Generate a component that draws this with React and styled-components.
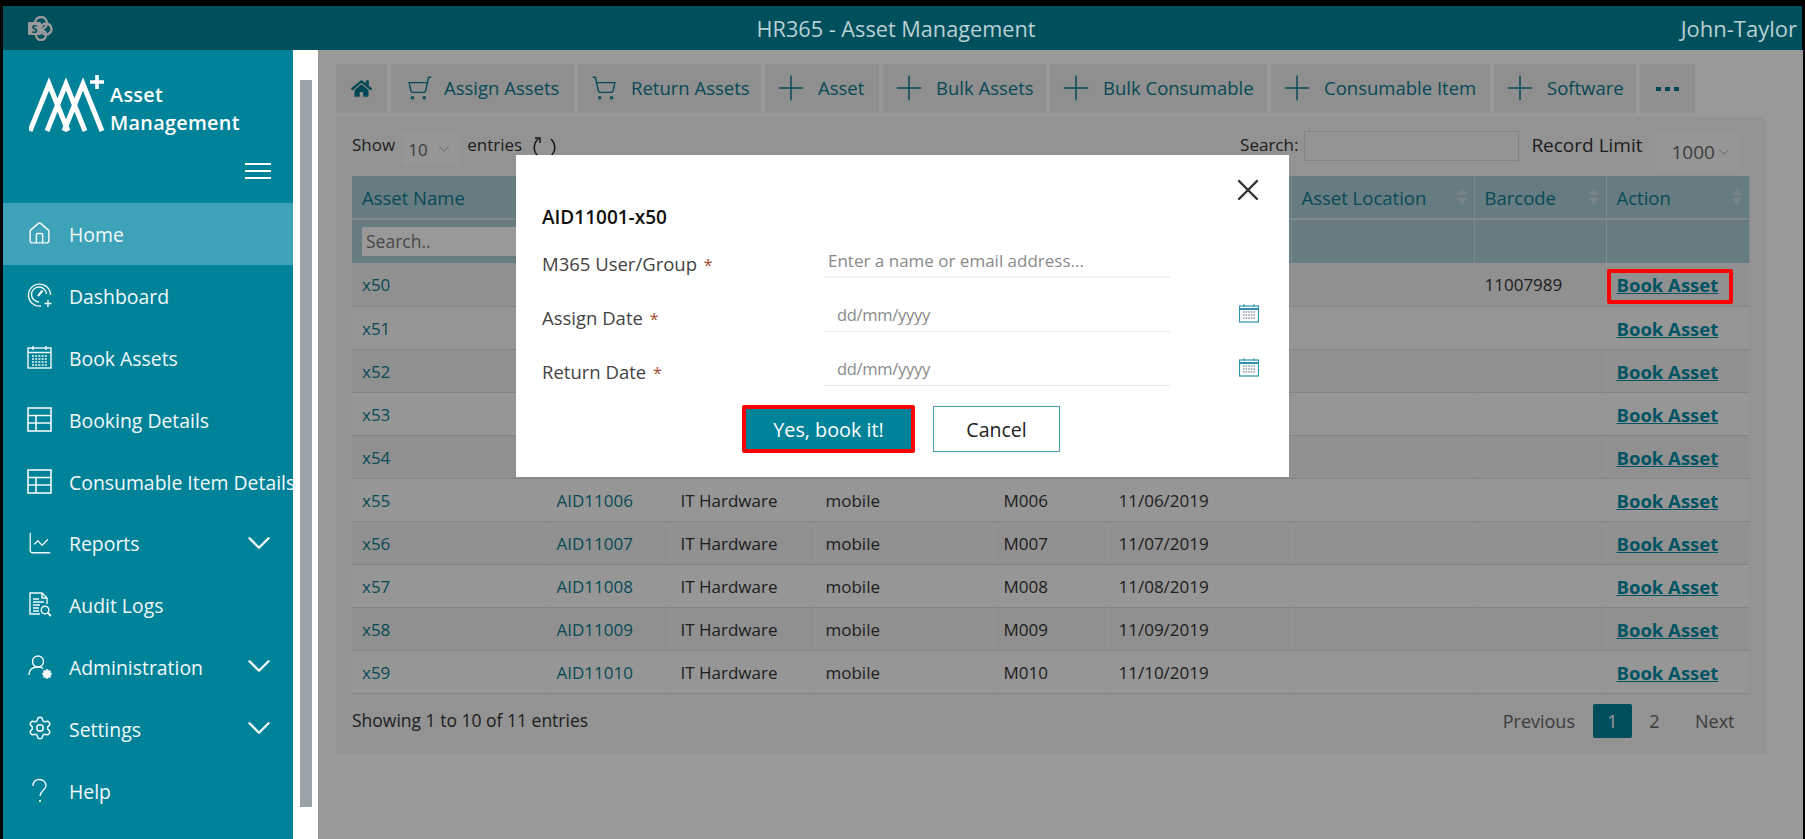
import React from 'react'
import styled, { createGlobalStyle } from 'styled-components'
import { House, Settings, ChevronDown, ShoppingCart, X, Plus, ChartLine } from 'lucide-react'
import { FaHome } from 'react-icons/fa'

const FONT = '"Open Sans", "Noto Sans", sans-serif'

const NAV_ITEMS = [
  { label: 'Home', icon: 'home', active: true },
  { label: 'Dashboard', icon: 'dashboard' },
  { label: 'Book Assets', icon: 'calendar' },
  { label: 'Booking Details', icon: 'table' },
  { label: 'Consumable Item Details', icon: 'table' },
  { label: 'Reports', icon: 'chart', expandable: true },
  { label: 'Audit Logs', icon: 'audit' },
  { label: 'Administration', icon: 'admin', expandable: true },
  { label: 'Settings', icon: 'settings', expandable: true },
  { label: 'Help', icon: 'help' }
]

const TOOLBAR_ITEMS = [
  { label: 'Assign Assets', icon: 'assign', width: 183, pad: 16, gap: 11 },
  { label: 'Return Assets', icon: 'cart', width: 183, pad: 13, gap: 14 },
  { label: 'Asset', icon: 'plus', width: 114, pad: 6, gap: 7 },
  { label: 'Bulk Assets', icon: 'plus', width: 163, pad: 6, gap: 7 },
  { label: 'Bulk Consumable', icon: 'plus', width: 217, pad: 6, gap: 7 },
  { label: 'Consumable Item', icon: 'plus', width: 219, pad: 6, gap: 7 },
  { label: 'Software', icon: 'plus', width: 142, pad: 6, gap: 7 }
]

// columns without a label sit behind the dialog in this view
const COLUMNS = [
  { key: 'name', label: 'Asset Name', width: 194, filter: true },
  { key: 'id', label: '', width: 124 },
  { key: 'category', label: '', width: 145 },
  { key: 'type', label: '', width: 178 },
  { key: 'model', label: '', width: 115 },
  { key: 'date', label: '', width: 183 },
  { key: 'location', label: 'Asset Location', width: 183 },
  { key: 'barcode', label: 'Barcode', width: 132 },
  { key: 'action', label: 'Action', width: 143 }
]

const ROWS = Array.from(new Array(10)).map((_, index) => {
  const number = String(index + 1).padStart(2, '0')
  const covered = index < 5
  return {
    name: `x${50 + index}`,
    id: covered ? '' : `AID110${number}`,
    category: covered ? '' : 'IT Hardware',
    type: covered ? '' : 'mobile',
    model: covered ? '' : `M0${number}`,
    date: covered ? '' : `11/${number}/2019`,
    barcode: index === 0 ? '11007989' : ''
  }
})

const GlobalStyle = createGlobalStyle`
  html, body {
    margin: 0;
    height: 100%;
    overflow: hidden;
    background: #000;
  }

  * {
    box-sizing: border-box;
  }

  body {
    font-family: ${FONT};
  }
`

const Page = styled.div`
  display: flex;
  flex-direction: column;
  height: 839px;
  padding: 6px 3px 0;
  background: #000;
`

const TopBar = styled.header`
  display: grid;
  grid-template-columns: 1fr auto 1fr;
  align-items: center;
  flex: 0 0 44px;
  padding: 0 5px 0 24px;
  background: #004f5c;
  color: #b9d0d4;
`

const TopTitle = styled.div`
  transform: translateX(-16px);
  font-size: 21.7px;
`

const UserName = styled.div`
  justify-self: end;
  font-size: 22px;
`

const Body = styled.div`
  display: flex;
  flex: 1;
  min-height: 0;
`

const Sidebar = styled.aside`
  flex: 0 0 290px;
  overflow: hidden;
  background: #008299;
  color: #fff;
`

const Brand = styled.div`
  display: flex;
  flex-direction: column;
  height: 153px;
  padding: 25px 24px 0 26px;
`

const BrandRow = styled.div`
  display: flex;
  align-items: flex-start;
`

const BrandText = styled.div`
  margin: 6px 0 0 -1px;
  font-size: 19.8px;
  font-weight: 600;
  line-height: 28px;
  letter-spacing: 0.3px;
`

const Hamburger = styled.div`
  display: flex;
  flex-direction: column;
  gap: 5px;
  align-self: flex-end;
  width: 26px;
  margin-top: 26px;
  margin-right: -2px;

  & > span {
    height: 2px;
    background: #fff;
  }
`

const NavRow = styled.div`
  display: flex;
  align-items: center;
  height: 61.8px;
  padding: 0 15px 0 24px;
  background: ${({ $active }) => ($active ? '#3ea3b8' : 'transparent')};
  white-space: nowrap;
  font-size: 19.4px;
  color: #f2f9fa;
`

const NavIcon = styled.span`
  display: flex;
  flex: 0 0 42px;
  align-items: center;
`

const NavLabel = styled.span`
  flex: 1;
  padding-top: 2px;
`

const ScrollTrack = styled.div`
  flex: 0 0 25px;
  padding: 30px 6px 32px 7px;
  background: #fff;
`

const ScrollThumb = styled.div`
  height: 100%;
  background: #9aa3aa;
`

const Main = styled.main`
  position: relative;
  flex: 1;
  padding: 14px 37px 0 18px;
  background: #fff;
  color: #333;
  font-size: 17px;
`

const Toolbar = styled.div`
  display: flex;
  gap: 4px;
  height: 49px;
`

const ToolButton = styled.div`
  display: flex;
  align-items: center;
  gap: ${({ $gap }) => $gap}px;
  width: ${({ $width }) => $width}px;
  padding: 0 0 2px ${({ $pad }) => $pad}px;
  background: #eeeeee;
  color: #0a7c92;
  font-size: 18.5px;
  white-space: nowrap;
`

const HomeButton = styled(ToolButton)`
  justify-content: center;
  width: 51px;
  padding: 0;
  color: #00788e;
`

const MoreButton = styled(ToolButton)`
  justify-content: center;
  gap: 4px;
  width: 55px;
  padding: 0;

  & > span {
    width: 5px;
    height: 4px;
    background: #007a90;
  }
`

const Panel = styled.section`
  height: 637px;
  margin-top: 4px;
  padding: 0 16px;
  background: #f5f5f5;
`

const Controls = styled.div`
  display: flex;
  justify-content: space-between;
  height: 59px;
`

const ControlGroup = styled.div`
  display: flex;
  align-items: flex-start;
  padding-top: 15px;
  font-size: 17px;
  line-height: 25px;
`

const LimitLabel = styled.span`
  font-size: 19px;
  line-height: 27px;
`

const SelectBox = styled.div`
  display: flex;
  align-items: center;
  justify-content: space-between;
  width: ${({ $width }) => $width}px;
  height: ${({ $height }) => $height}px;
  margin: ${({ $margin }) => $margin};
  padding: 0 6px 0 ${({ $left }) => $left}px;
  background: #fbfbfb;
  color: #666;
  font-size: ${({ $size }) => $size}px;
  flex-shrink: 0;
`

const RefreshIcon = styled.svg`
  margin: 4px 0 0 10px;
`

const SearchInput = styled.div`
  width: 215px;
  height: 30px;
  margin: -1px 12px 0 6px;
  border: 1px solid #dadada;
  background: #f5f5f5;
`

const Table = styled.table`
  width: 1397px;
  border-collapse: collapse;
  table-layout: fixed;
  font-size: 17px;
`

const HeadCell = styled.th`
  position: relative;
  height: 43px;
  padding: 0 10px;
  border-right: 1px solid #d5e6e9;
  border-bottom: 2px solid #d5e6e9;
  background: #accfd5;
  color: #0a7c92;
  font-size: 18.5px;
  font-weight: 400;
  text-align: left;
  white-space: nowrap;
`

const SortArrows = styled.span`
  position: absolute;
  top: 12px;
  right: 7px;
  display: flex;
  flex-direction: column;
  gap: 3px;

  &::before,
  &::after {
    content: '';
    border-right: 5px solid transparent;
    border-left: 5px solid transparent;
  }

  &::before {
    border-bottom: 7px solid #c8dde1;
  }

  &::after {
    border-top: 7px solid #c8dde1;
  }
`

const FilterCell = styled.td`
  height: 44px;
  padding: 0 10px;
  border-right: 1px solid #d5e6e9;
  background: #accfd5;
`

const FilterInput = styled.div`
  height: 29px;
  padding-left: 4px;
  background: #fff;
  color: #777;
  font-size: 17.5px;
  line-height: 28px;
`

const Row = styled.tr`
  background: ${({ $striped }) => ($striped ? '#f0f0f0' : '#fbfbfb')};
`

const Cell = styled.td`
  position: relative;
  height: 43px;
  padding: 1px 10px 0;
  border-right: 1px solid ${({ $striped }) => ($striped ? '#f8f8f8' : 'transparent')};
  border-bottom: 1px solid #dddddd;
  color: ${({ $link }) => ($link ? '#0a7c92' : '#333')};
  white-space: nowrap;
`

const BookLink = styled.a`
  color: #008ca5;
  font-size: 18.5px;
  font-weight: 700;
  text-decoration: underline;
`

const Highlight = styled.div`
  position: absolute;
  z-index: 20;
  top: 6px;
  left: 0;
  width: 126px;
  height: 35px;
  border: 4px solid #f00;
  border-radius: 2px;
`

const PanelFooter = styled.div`
  display: flex;
  align-items: flex-start;
  justify-content: space-between;
  padding: 14px 15px 0 0;
  font-size: 17.5px;
`

const Pager = styled.div`
  display: flex;
  align-items: center;
  margin-top: -4px;
  color: #666;
  font-size: 18px;
`

const PageNumber = styled.div`
  display: flex;
  align-items: center;
  justify-content: center;
  width: 39px;
  height: 34px;
  margin: ${({ $margin }) => $margin || '0'};
  border-radius: 2px;
  background: ${({ $current }) => ($current ? '#008299' : 'transparent')};
  color: ${({ $current }) => ($current ? '#fff' : '#666')};
`

const Overlay = styled.div`
  position: absolute;
  z-index: 10;
  inset: 0;
  padding: 105px 0 0 198px;
  background: rgba(0, 0, 0, 0.4);
`

const Modal = styled.div`
  position: relative;
  width: 773px;
  height: 322px;
  padding: 50px 26px 0;
  background: #fff;
  color: #444;
`

const CloseButton = styled.div`
  position: absolute;
  top: 17px;
  right: 23px;
  color: #333;
  line-height: 0;
`

const ModalTitle = styled.div`
  color: #111;
  font-size: 19px;
  font-weight: 600;
  line-height: 24px;
`

const FormRow = styled.div`
  display: grid;
  grid-template-columns: 281px 347px 1fr;
  height: 54px;
  margin-top: ${({ $first }) => ($first ? '-5px' : '0')};
`

const FormLabel = styled.div`
  align-self: end;
  font-size: 18.5px;
  line-height: 26px;
`

const Required = styled.span`
  margin-left: 2px;
  color: #a5482f;
  font-size: 16px;
`

const FormInput = styled.div`
  align-self: end;
  height: 37px;
  padding: 7px 0 0 ${({ $left }) => $left}px;
  border-bottom: ${({ $thick }) => ($thick ? '2px solid #f2f2f2' : '1px solid #e6e6e6')};
  color: #8a8a8a;
  font-size: ${({ $thick }) => ($thick ? '17px' : '16.5px')};
  letter-spacing: ${({ $thick }) => ($thick ? '0' : '-0.3px')};
  line-height: 26px;
`

const DateIcon = styled.div`
  align-self: end;
  justify-self: end;
  height: 19px;
  margin: 0 4px 9px 0;
`

const ModalActions = styled.div`
  display: flex;
  align-items: center;
  gap: 18px;
  margin: 19px 0 0 200px;
`

const ConfirmButton = styled.div`
  display: flex;
  align-items: center;
  justify-content: center;
  width: 173px;
  height: 48px;
  border: 4px solid #f00;
  border-radius: 2px;
  background: #008299;
  color: #fff;
  font-size: 19.8px;
`

const CancelButton = styled.div`
  display: flex;
  align-items: center;
  justify-content: center;
  width: 127px;
  height: 46px;
  border: 1px solid #4c9fb0;
  color: #222;
  font-size: 19.5px;
`

const SharePointIcon = () => (
  <svg width="26" height="25" viewBox="0 0 26 25">
    <circle cx="14" cy="7" r="6" fill="none" stroke="#9b9b9b" strokeWidth="2.4" />
    <circle cx="19" cy="13" r="5.5" fill="none" stroke="#9b9b9b" strokeWidth="2.4" />
    <circle cx="14" cy="19" r="5" fill="none" stroke="#9b9b9b" strokeWidth="2.4" />
    <rect x="1" y="6" width="13" height="13" rx="1" fill="#9b9b9b" />
    <text x="7.5" y="16.5" textAnchor="middle" fontSize="11" fontWeight="700" fontFamily="Open Sans" fill="#004f5c">S</text>
  </svg>
)

const Logo = () => (
  <svg width="82" height="58" viewBox="0 0 82 58" fill="none" stroke="#fff">
    <path d="M1 56 L20 9 L39 56 M18 56 L37 9 L56 56 M35 56 L54 9 L73 56" strokeWidth="5" />
    <path d="M68 0 V14 M61 7 H75" strokeWidth="3.6" />
  </svg>
)

const CustomIcon = ({ name, size = 25, color = 'currentColor' }) => {
  const common = {
    width: size,
    height: size,
    viewBox: '0 0 25 25',
    fill: 'none',
    stroke: color,
    strokeWidth: 1.4
  }
  if (name === 'dashboard') {
    return (
      <svg {...common}>
        <path d="M14 23 A11 11 0 1 1 23.5 12" />
        <path d="M12 19 A7.5 7.5 0 1 1 19.5 11" />
        <path d="M11 13 L15.5 7.5" strokeWidth="2" />
        <path d="M21 17 V24 M17.5 20.5 H24.5" />
      </svg>
    )
  }
  if (name === 'calendar') {
    return (
      <svg {...common}>
        <rect x="1" y="3" width="23" height="20" />
        <path d="M1 7.5 H24 M6 1 V5 M19 1 V5" />
        <path d="M5 11 H20 M5 14 H20 M5 17 H20 M5 20 H20" strokeWidth="1.7" strokeDasharray="2 1.2" />
      </svg>
    )
  }
  if (name === 'table') {
    return (
      <svg {...common}>
        <rect x="1" y="1" width="23" height="23" strokeWidth="1.6" />
        <path d="M1 8.5 H24 M1 16 H24 M9 8.5 V24" strokeWidth="1.6" />
      </svg>
    )
  }
  if (name === 'audit') {
    return (
      <svg {...common}>
        <path d="M13 22 H3 V1 H15 L20 6 V12" />
        <path d="M15 1 V6 H20 M6 7 H12 M6 10 H17 M6 13 H13 M6 16 H12 M6 19 H12" />
        <circle cx="18" cy="18" r="3.8" />
        <path d="M21 21 L24 24" strokeWidth="1.8" />
      </svg>
    )
  }
  if (name === 'admin') {
    return (
      <svg {...common}>
        <circle cx="11" cy="7.5" r="5.5" />
        <path d="M2 21 C2 15 6 13 11 13 C13 13 15 13.4 16 14.5" />
        <circle cx="20" cy="20" r="2.8" strokeWidth="2.4" />
        <path d="M20 15 V25 M15 20 H25 M16.5 16.5 L23.5 23.5 M23.5 16.5 L16.5 23.5" strokeWidth="1.5" />
      </svg>
    )
  }
  if (name === 'help') {
    return (
      <svg {...common}>
        <path d="M6 8 C6 3 9 1.5 12.5 1.5 C16 1.5 19 4 19 7.5 C19 12 13 12.5 13 18" />
        <path d="M13 22 V24" strokeWidth="1.8" />
      </svg>
    )
  }
  return null
}

const navIconFor = (name) => {
  if (name === 'home') return <House size={25} strokeWidth={1.4} />
  if (name === 'settings') return <Settings size={26} strokeWidth={1.4} />
  if (name === 'chart') return <ChartLine size={26} strokeWidth={1.2} />
  return <CustomIcon name={name} />
}

const toolIconFor = (name) => {
  if (name === 'assign') {
    return <ShoppingCart size={26} strokeWidth={1.3} style={{ transform: 'scaleX(-1)' }} />
  }
  if (name === 'cart') return <ShoppingCart size={26} strokeWidth={1.3} />
  return <Plus size={40} strokeWidth={0.9} />
}

const CalendarSmall = () => (
  <svg width="20" height="19" viewBox="0 0 20 19" fill="none" stroke="#2e93a8">
    <rect x="0.5" y="2" width="19" height="16" strokeWidth="1.2" />
    <path d="M0.5 5 H19.5" strokeWidth="2" />
    <path d="M5 0 V3 M15 0 V3" />
    <path d="M4 8 H16 M4 11 H16 M4 14 H16" stroke="#8a9ca3" strokeWidth="1.6" strokeDasharray="1.6 1" />
  </svg>
)

const renderField = (label, input, dateIcon, first) => (
  <FormRow $first={first} key={label}>
    <FormLabel>
      {label} <Required>*</Required>
    </FormLabel>
    {input}
    {dateIcon ? (
      <DateIcon>
        <CalendarSmall />
      </DateIcon>
    ) : null}
  </FormRow>
)

export default function App() {
  return (
    <Page>
      <GlobalStyle />
      <TopBar>
        <SharePointIcon />
        <TopTitle>HR365 - Asset Management</TopTitle>
        <UserName>John-Taylor</UserName>
      </TopBar>
      <Body>
        <Sidebar>
          <Brand>
            <BrandRow>
              <Logo />
              <BrandText>
                Asset
                <br />
                Management
              </BrandText>
            </BrandRow>
            <Hamburger>
              <span />
              <span />
              <span />
            </Hamburger>
          </Brand>
          {NAV_ITEMS.map((item) => (
            <NavRow $active={item.active} key={item.label}>
              <NavIcon>{navIconFor(item.icon)}</NavIcon>
              <NavLabel>{item.label}</NavLabel>
              {item.expandable ? <ChevronDown size={38} strokeWidth={1.5} /> : null}
            </NavRow>
          ))}
        </Sidebar>
        <ScrollTrack>
          <ScrollThumb />
        </ScrollTrack>
        <Main>
          <Toolbar>
            <HomeButton>
              <FaHome size={21} />
            </HomeButton>
            {TOOLBAR_ITEMS.map((item) => (
              <ToolButton $width={item.width} $pad={item.pad} $gap={item.gap} key={item.label}>
                {toolIconFor(item.icon)}
                {item.label}
              </ToolButton>
            ))}
            <MoreButton>
              <span />
              <span />
              <span />
            </MoreButton>
          </Toolbar>
          <Panel>
            <Controls>
              <ControlGroup>
                Show
                <SelectBox $width={56} $height={32} $margin="1px 8px 0 8px" $left={5} $size={17}>
                  10
                  <ChevronDown size={18} strokeWidth={1.3} color="#aaa" />
                </SelectBox>
                entries
                <RefreshIcon width="26" height="22" viewBox="0 0 26 22" fill="none" stroke="#222" strokeWidth="1.5">
                  <path d="M6 3 C1 8 1 15 6 20" />
                  <path d="M19 3 C24 8 24 15 19 20" />
                  <path d="M3 2 L8 2 L8 7" />
                </RefreshIcon>
              </ControlGroup>
              <ControlGroup>
                Search:
                <SearchInput />
                <LimitLabel>Record Limit</LimitLabel>
                <SelectBox $width={82} $height={36} $margin="2px 11px 0 14px" $left={15} $size={19}>
                  1000
                  <ChevronDown size={18} strokeWidth={1.3} color="#aaa" />
                </SelectBox>
              </ControlGroup>
            </Controls>
            <Table>
              <colgroup>
                {COLUMNS.map((column) => (
                  <col key={column.key} style={{ width: column.width }} />
                ))}
              </colgroup>
              <thead>
                <tr>
                  {COLUMNS.map((column) => (
                    <HeadCell key={column.key}>
                      {column.label}
                      <SortArrows />
                    </HeadCell>
                  ))}
                </tr>
                <tr>
                  {COLUMNS.map((column) => (
                    <FilterCell key={column.key}>
                      {column.filter ? <FilterInput>Search..</FilterInput> : null}
                    </FilterCell>
                  ))}
                </tr>
              </thead>
              <tbody>
                {ROWS.map((row, index) => {
                  const striped = index % 2 === 0
                  return (
                    <Row $striped={striped} key={row.name}>
                      <Cell $striped={striped} $link>{row.name}</Cell>
                      <Cell $striped={striped} $link>{row.id}</Cell>
                      <Cell $striped={striped}>{row.category}</Cell>
                      <Cell $striped={striped}>{row.type}</Cell>
                      <Cell $striped={striped}>{row.model}</Cell>
                      <Cell $striped={striped}>{row.date}</Cell>
                      <Cell $striped={striped} />
                      <Cell $striped={striped}>{row.barcode}</Cell>
                      <Cell $striped={striped}>
                        <BookLink>Book Asset</BookLink>
                        {index === 0 ? <Highlight /> : null}
                      </Cell>
                    </Row>
                  )
                })}
              </tbody>
            </Table>
            <PanelFooter>
              <div>Showing 1 to 10 of 11 entries</div>
              <Pager>
                Previous
                <PageNumber $current $margin="0 3px 0 18px">1</PageNumber>
                <PageNumber $margin="0 21px 0 0">2</PageNumber>
                Next
              </Pager>
            </PanelFooter>
          </Panel>
          <Overlay>
            <Modal>
              <CloseButton>
                <X size={36} strokeWidth={1.6} />
              </CloseButton>
              <ModalTitle>AID11001-x50</ModalTitle>
              {renderField('M365 User/Group', <FormInput $left={5} $thick>Enter a name or email address...</FormInput>, false, true)}
              {renderField('Assign Date', <FormInput $left={14}>dd/mm/yyyy</FormInput>, true)}
              {renderField('Return Date', <FormInput $left={14}>dd/mm/yyyy</FormInput>, true)}
              <ModalActions>
                <ConfirmButton>Yes, book it!</ConfirmButton>
                <CancelButton>Cancel</CancelButton>
              </ModalActions>
            </Modal>
          </Overlay>
        </Main>
      </Body>
    </Page>
  )
}
